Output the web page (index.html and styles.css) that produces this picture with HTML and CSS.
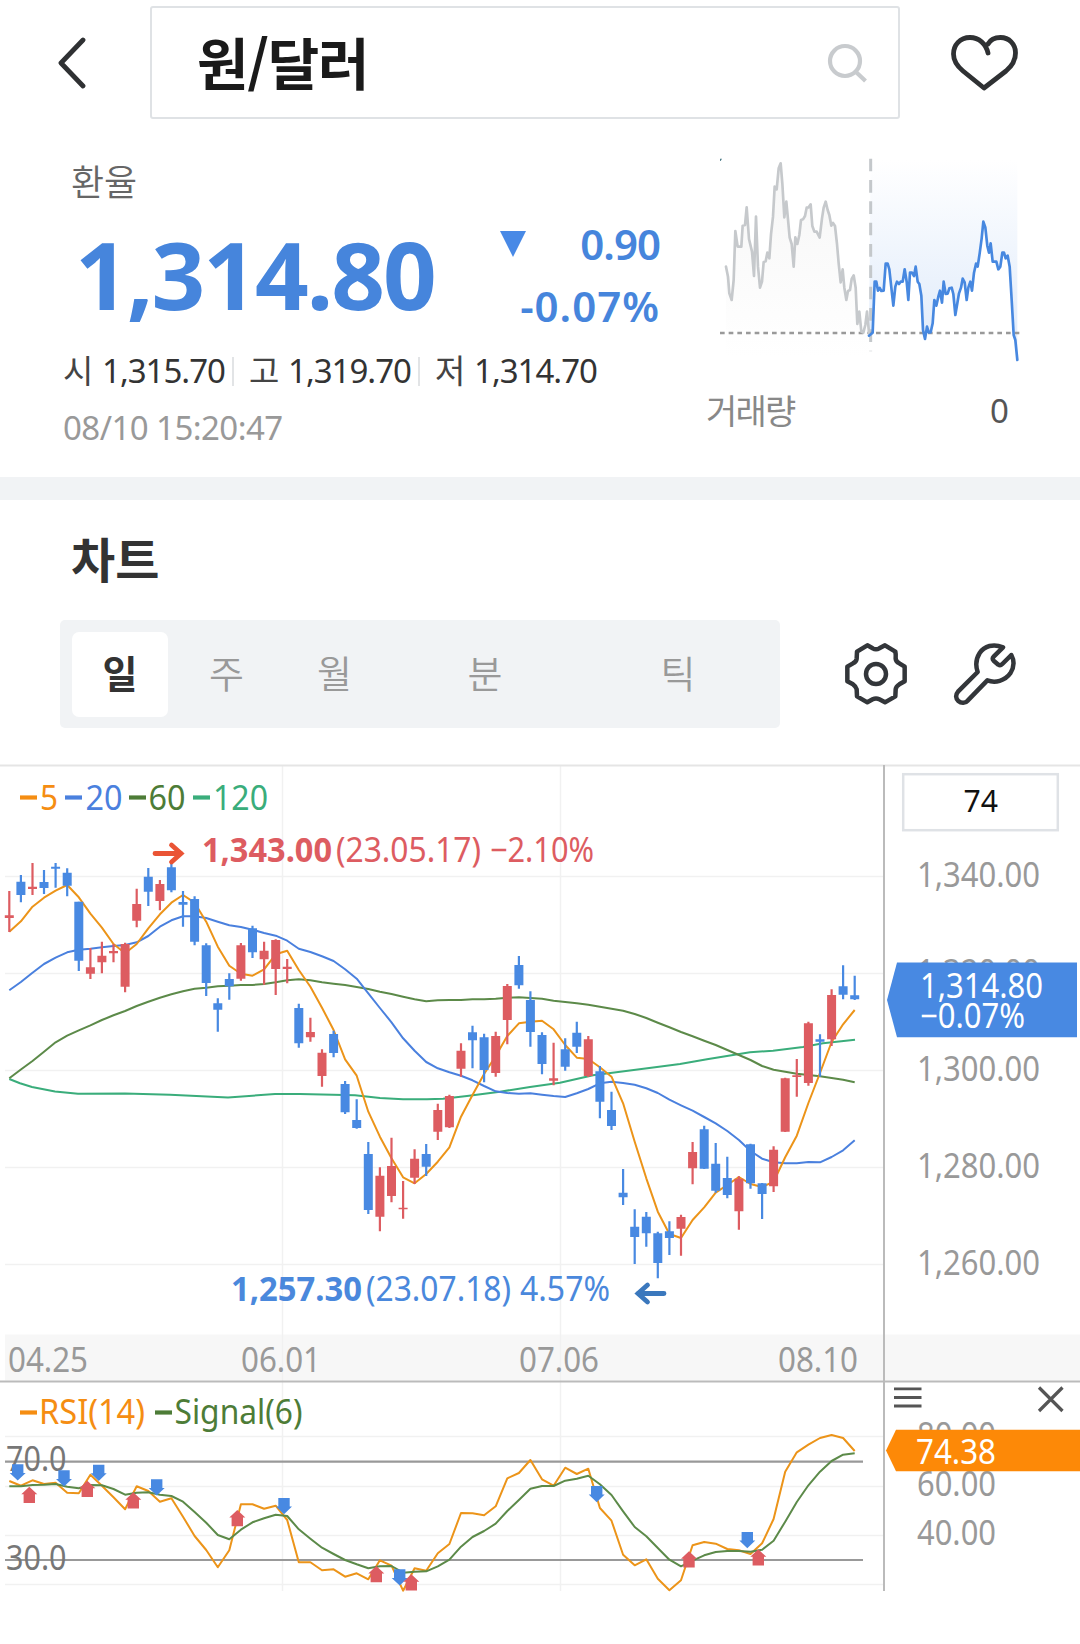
FILE: index.html
```html
<!DOCTYPE html>
<html lang="ko">
<head>
<meta charset="utf-8">
<title>원/달러</title>
<link rel="stylesheet" href="styles.css">
</head>
<body>
<header class="topbar">
  <button class="icon-button back" aria-label="뒤로">
    <svg width="30" height="52" viewBox="0 0 30 52"><path class="stroke" d="M26 3 4 26 26 49"/></svg>
  </button>
  <div class="search">
    <h1 class="search-title">원/달러</h1>
    <svg class="search-icon" width="42" height="42" viewBox="0 0 42 42"><circle cx="18" cy="18" r="15"/><path d="M29 29 38.5 38"/></svg>
  </div>
  <button class="icon-button like" aria-label="관심">
    <svg width="68" height="58" viewBox="950 33 68 58"><path class="stroke" d="M988 52C986 43 979 36.5 970 36.5C960 36.5 953.5 44 953.5 53C953.5 60 957 65 963 70L984 87L1006 70C1012 65 1015.5 60 1015.5 52C1015.5 43 1009 36.5 1000.500 36.500C995 36.500 990.500 38.500 988 43"/></svg>
  </button>
</header>

<section class="summary">
  <div class="quote">
    <p class="quote-label">환율</p>
    <div class="price-row">
      <strong class="price">1,314.80</strong>
      <div class="change">
        <span class="change-value"><svg width="26" height="26" viewBox="0 0 26 26"><path d="M0 0H26L13 26Z"/></svg>0.90</span>
        <span class="change-rate">-0.07%</span>
      </div>
    </div>
    <ul class="ohlc">
      <li><em>시</em>1,315.70</li>
      <li><em>고</em>1,319.70</li>
      <li><em>저</em>1,314.70</li>
    </ul>
    <p class="time">08/10 15:20:47</p>
  </div>
  <div class="mini">
    <svg width="340" height="240" viewBox="0 0 1020 720" id="mini">
      <defs>
        <linearGradient id="blueFade" x1="0" y1="60" x2="0" y2="560" gradientUnits="userSpaceOnUse"><stop offset="0" stop-color="#fff"/><stop offset="1" stop-color="#e3edfb"/></linearGradient>
        <linearGradient id="grayFade" x1="0" y1="80" x2="0" y2="650" gradientUnits="userSpaceOnUse"><stop offset="0" stop-color="#f6f6f6"/><stop offset="1" stop-color="#fff"/></linearGradient>
      </defs>
    </svg>
    <p class="volume"><span>거래량</span><b>0</b></p>
  </div>
</section>

<section class="chart-head">
  <h2>차트</h2>
  <div class="tools">
    <nav class="tabs">
      <a class="tab active">일</a><a class="tab">주</a><a class="tab">월</a><a class="tab">분</a><a class="tab">틱</a>
    </nav>
    <svg class="gear" width="66" height="66" viewBox="24 35 198 198"><path d="M97 48L113 57Q123 63 133 57L150 48L181 67Q183 75 182 88Q183 97 193 102L209 112V156L193 165Q183 171 182 180L181 201L150 219L133 210Q123 205 113 210L97 219L66 201L65 180Q63 171 54 165L37 156V112L54 102Q64 97 65 88L66 67Z"/><circle cx="123" cy="134" r="30"/></svg>
    <svg class="wrench" width="66" height="66" viewBox="351 35 198 198"><path d="M504 54C475 42 448 50 434 71C422 90 421 108 428 128L369 187C361 196 362 208 370 215C379 223 391 222 398 214L457 153C480 162 510 155 526 132C538 113 537 92 529 77L502 104Q496 110 490 106L476 94Q470 88 476 82Z"/></svg>
  </div>
</section>

<section class="chart">
  <svg id="chart" width="1080" height="880" viewBox="0 764 1080 880">
    <rect class="band" x="5" y="1334.500" width="1075" height="46"/>
    <path class="grid" d="M5 876.500H883M5 973.500H883M5 1070.500H883M5 1167.500H883M5 1264.500H883M5 1436.500H883M5 1486.500H883M5 1535.500H883M5 1584.500H883M282.500 766V1591M560.500 766V1591"/>
    <path class="top-line" d="M0 765.500H1080"/>
    <path class="frame" d="M884 765V1591M0 1381.500H1080"/>

    <g id="price-plot"></g>

    <g class="legend">
      <path class="c5" d="M20 797.500H37"/><text class="c5" x="40" y="809.800" textLength="18">5</text>
      <path class="c20" d="M65 797.500H82"/><text class="c20" x="85.500" y="809.800" textLength="37">20</text>
      <path class="c60" d="M129 797.500H146"/><text class="c60" x="148.500" y="809.800" textLength="37">60</text>
      <path class="c120" d="M193 797.500H210"/><text class="c120" x="213" y="809.800" textLength="55">120</text>
      <path class="cr" d="M20 1412.500H37"/><text class="cr" x="39" y="1424.200" textLength="106">RSI(14)</text>
      <path class="c60" d="M155 1412.500H172"/><text class="c60" x="174.500" y="1424.200" textLength="128">Signal(6)</text>
    </g>

    <g class="high">
      <path d="M155 853.500H181M171.500 845 181 853.500 171.500 862"/>
      <text class="bold" x="202" y="861.500" textLength="130">1,343.00</text>
      <text x="336" y="861.500" textLength="145">(23.05.17)</text>
      <text x="490" y="861.500" textLength="104">−2.10%</text>
    </g>
    <g class="low">
      <path d="M664 1293.500H638M647.500 1285 638 1293.500 647.500 1302"/>
      <text class="bold" x="231" y="1301.200" textLength="131">1,257.30</text>
      <text x="366" y="1301.200" textLength="145">(23.07.18)</text>
      <text x="520" y="1301.200" textLength="90">4.57%</text>
    </g>

    <g class="axis">
      <text x="8" y="1372.200" textLength="80">04.25</text>
      <text x="241" y="1372.200" textLength="80">06.01</text>
      <text x="519" y="1372.200" textLength="80">07.06</text>
      <text x="778" y="1372.200" textLength="80">08.10</text>
      <text x="917" y="886.500" textLength="123">1,340.00</text>
      <text x="917" y="983.500" textLength="123">1,320.00</text>
      <text x="917" y="1080.500" textLength="123">1,300.00</text>
      <text x="917" y="1177.500" textLength="123">1,280.00</text>
      <text x="917" y="1274.500" textLength="123">1,260.00</text>
      <text x="917" y="1446.500" textLength="79">80.00</text>
      <text x="917" y="1496.200" textLength="79">60.00</text>
      <text x="917" y="1545" textLength="79">40.00</text>
    </g>

    <rect class="count-box" x="903.200" y="774.200" width="154.600" height="56"/>
    <text class="count" x="963.500" y="812" textLength="34.500">74</text>

    <path class="tag-blue" d="M887 1000 897 962.500H1077V1037.300H897Z"/>
    <path class="tag-orange" d="M886 1450.500 896 1429.700H1080V1471.300H896Z"/>
    <g class="tag-text">
      <text x="920" y="997.500" textLength="123">1,314.80</text>
      <text x="920" y="1027.500" textLength="105">−0.07%</text>
      <text x="916" y="1463.500" textLength="80">74.38</text>
    </g>

    <path class="menu" d="M894 1388.800H921.500M894 1397.500H921.500M894 1406H921.500"/>
    <path class="close" d="M1039 1387.500 1062.500 1411M1062.500 1387.500 1039 1411"/>

    <path class="level" d="M5 1461.700H863M5 1560H863"/>
    <g class="level-text">
      <text x="6" y="1471.200" textLength="60.500">70.0</text>
      <text x="6" y="1569.500" textLength="60.500">30.0</text>
    </g>
    <g id="rsi-plot"></g>
  </svg>
</section>
<script src="script.js"></script>
</body>
</html>
```
FILE: styles.css
```css
* { box-sizing: border-box; margin: 0; padding: 0; }

body {
  width: 1080px;
  height: 1644px;
  overflow: hidden;
  background: #fff;
  color: #2f3133;
  font-family: "Noto Sans", "Noto Sans CJK KR", sans-serif;
}

svg { display: block; }
ul { list-style: none; }
em { font-style: normal; }

/* Top bar */
.topbar {
  display: grid;
  grid-template-columns: 150px 750px 1fr;
  align-items: center;
  height: 126px;
}
.icon-button { border: 0; background: none; }
.back { padding-left: 57px; }
.like { padding-left: 50px; }
.stroke { fill: none; stroke: #2f3133; stroke-width: 4.8; stroke-linejoin: round; stroke-linecap: round; }
.search {
  display: flex;
  align-items: center;
  justify-content: space-between;
  height: 113px;
  margin-top: -1px;
  padding: 0 29px 0 45px;
  border: 2px solid #dfe2e5;
  border-radius: 3px;
}
.search-title {
  font: 700 56px/80px "Noto Sans CJK KR", sans-serif;
  letter-spacing: -1.3px;
  color: #1a1a1a;
  margin-top: -4px;
}
.search-icon { fill: none; stroke: #c8cbce; stroke-width: 4.2; margin-top: 3px; }

/* Quote summary */
.summary {
  display: grid;
  grid-template-columns: 700px 380px;
  height: 374px;
  border-bottom: 23px solid #f1f3f5;
}
.quote { padding: 32px 0 0 63px; }
.quote-label {
  margin-bottom: 2px;
  padding-left: 8px;
  font: 350 36px/44px "Noto Sans CJK KR", sans-serif;
  letter-spacing: 0;
  color: #666;
}
.price-row {
  display: flex;
  justify-content: space-between;
  height: 140px;
  padding-right: 40px;
  color: #4685dc;
}
.price {
  margin-left: 12px;
  font-size: 94px;
  line-height: 140px;
  letter-spacing: -2px;
}
.change {
  display: flex;
  flex-direction: column;
  width: 160px;
  padding-top: 9px;
  font-weight: 600;
  font-size: 42px;
  line-height: 62px;
  letter-spacing: -1px;
  text-align: right;
}
.change-value { display: flex; justify-content: space-between; }
.change-rate { letter-spacing: 1px; }
.change svg { margin-top: 18px; fill: #4889e6; }
.ohlc { display: flex; font-size: 33px; line-height: 53px; letter-spacing: -1px; color: #333; }
.ohlc li { position: relative; width: 186px; }
.ohlc em { display: inline-block; width: 39px; color: #444; }
.ohlc li:not(:last-child)::after {
  content: "";
  position: absolute;
  left: 169px;
  top: 13px;
  width: 2px;
  height: 29px;
  background: #e2e4e6;
}
.time { padding-top: 4px; font-size: 33px; line-height: 53px; letter-spacing: -.55px; color: #999; }

.mini { padding-top: 14px; }
.mini .volume {
  display: flex;
  justify-content: space-between;
  margin-top: 5px;
  padding: 0 71px 0 6px;
  font-size: 34px;
  line-height: 52px;
  letter-spacing: -1.8px;
  color: #888;
}
.volume b { font-weight: 400; font-size: 33px; color: #555; letter-spacing: 0; }
.spark-gray, .spark-blue { fill: none; stroke-width: 8; stroke-linejoin: round; stroke-linecap: round; }
.spark-gray { stroke: #c6c9cc; }
.spark-blue { stroke: #4788e0; }
.spark-base { stroke: #999; stroke-width: 8; stroke-dasharray: 14 12; }
.spark-split { stroke: #c4c8cb; stroke-width: 9; stroke-dasharray: 38 26; }

/* Chart heading and period tabs */
.chart-head { height: 264px; padding: 27px 0 0 60px; }
.chart-head h2 {
  padding-left: 11px;
  font: 700 48px/60px "Noto Sans CJK KR", sans-serif;
  letter-spacing: 0;
  color: #333;
}
.tools { display: flex; align-items: center; margin-top: 33px; }
.tabs {
  display: grid;
  grid-template-columns: 96px 108px 108px 193px 193px;
  align-items: center;
  width: 720px;
  height: 108px;
  padding: 0 12px;
  border-radius: 5px;
  background: #f1f3f5;
}
.tab {
  height: 85px;
  padding-left: 9px;
  font: 350 38px/80px "Noto Sans CJK KR", sans-serif;
  text-align: center;
  color: #999;
}
.tab.active { padding-left: 0; border-radius: 7px; background: #fff; font-weight: 700; color: #333; }
.gear, .wrench { fill: none; stroke: #33363a; stroke-width: 13.5; stroke-linejoin: round; }
.gear { margin-left: 63px; }
.wrench { margin-left: 43px; }

/* Chart */
.chart text { font-size: 34px; font-weight: 400; }
.band { fill: #f7f7f7; }
.grid { stroke: #f1f1f1; stroke-width: 1.5; }
.top-line { stroke: #e5e5e5; stroke-width: 2; }
.frame { stroke: #bbb; stroke-width: 2; fill: none; }
.legend path { stroke-width: 4.2; }
path.c5, path.cr { stroke: #f58d12; }
path.c20 { stroke: #4a80de; }
path.c60 { stroke: #4d7c37; }
path.c120 { stroke: #3aad7b; }
text.c5, text.cr { fill: #f58d12; }
text.c20 { fill: #4a80de; }
text.c60 { fill: #4d7c37; }
text.c120 { fill: #3aad7b; }
.high path { fill: none; stroke: #ea5435; stroke-width: 4.8; stroke-linecap: round; }
.high text { fill: #dd5c61; }
.low path { fill: none; stroke: #3b78bd; stroke-width: 4.8; stroke-linecap: round; }
.low text { fill: #4a88dc; }
.chart text.bold { font-weight: 700; }
.axis text { fill: #999; }
.count-box { fill: #fff; stroke: #dfe2e6; stroke-width: 2.5; }
.chart text.count { fill: #111; font-size: 31px; }
.tag-blue { fill: #4889e2; }
.tag-orange { fill: #fd8907; }
.tag-text text { fill: #fff; }
.menu { stroke: #555; stroke-width: 2.8; }
.close { stroke: #555; stroke-width: 3.2; }
.level { stroke: #999; stroke-width: 2.2; }
.level-text text { fill: #777; }
.line { fill: none; stroke-width: 2; stroke-linejoin: round; }
.line.c5 { stroke: #ec9419; }
.line.c60 { stroke: #5c8a49; }
.wick { fill: none; stroke-width: 2.2; }
.body { fill: none; stroke-width: 9; }
.up { stroke: #dd5c61; }
.down { stroke: #4889e2; }
.mark-up { fill: #dd5c61; }
.mark-down { fill: #4889e2; }
```
FILE: script.js
```js
const NS = 'http://www.w3.org/2000/svg';
const x = i => 9.3 + i * 11.581;

// Chart labels use slightly condensed digits
document.querySelectorAll('#chart text').forEach(t => t.setAttribute('lengthAdjust', 'spacingAndGlyphs'));

function draw(parent, cls, d, extra) {
  const p = document.createElementNS(NS, 'path');
  if (cls) p.setAttribute('class', cls);
  p.setAttribute('d', d);
  for (const k in extra) p.setAttribute(k, extra[k]);
  parent.appendChild(p);
}
const series = ys => 'M' + ys.map((y, i) => x(i).toFixed(1) + ' ' + y).join('L');

// Daily candles: direction, wick top, body top, body bottom, wick bottom
const candles = `U 891 915.3 918 932,D 875 881.7 895 902.3,U 863 886.7 889 895,D 870 882 888 894,D 863 866.7 868.7 887.7,D 868.3 872.7 885.7 896.3,D 901.7 901.7 960.7 971,U 948 967.3 973.7 979,U 941.7 955.7 962.3 973.3,U 944 951 953.3 962.3,U 942.7 944 986.7 992.3,U 888.7 904 920.7 927.3,D 868 876.7 891.7 906,U 880 884 901 910.3,D 863 867.3 890.3 892.3,D 891 902 904.7 926.7,D 896.3 899 941.7 945.3,D 943.3 945.3 983 996,D 998.3 1003.3 1009.7 1031.7,D 973.3 979 986.3 999.7,U 943 945.3 978.7 980.7,D 925.7 928.3 952.3 958,U 941.7 950.7 959.3 984.7,U 939.3 940 969 995,U 959 966.7 969 983.3,D 1003.7 1008 1043.3 1047.7,U 1017.7 1032 1037.3 1041.7,U 1049.3 1052.7 1076 1086.7,D 1030.7 1034 1053 1057.3,D 1081 1084 1112.3 1114,D 1099.3 1120 1128 1128.7,D 1142 1154 1210 1214,U 1167.3 1175.7 1216.7 1231.3,U 1137.7 1166 1196 1202.3,U 1181 1207.7 1209.3 1218.7,U 1149.3 1158.7 1177.7 1184,D 1144 1154 1166.7 1176,U 1103.7 1110 1131.7 1140,U 1094.7 1096 1127.3 1128,U 1043.3 1050.7 1068.7 1076.7,D 1025.7 1032.3 1040.3 1068.3,D 1033.7 1037.3 1070 1082.3,U 1031.7 1036 1073 1076.7,U 984 986 1020 1044.3,D 956 965 985.3 988.7,D 991.3 1000 1032 1046.7,D 1032.3 1035 1064 1074.3,U 1042.7 1078.3 1080.7 1085.3,D 1038.3 1049.3 1066.7 1070.7,D 1021.7 1032.7 1046.7 1053,U 1036 1039.3 1076 1077,D 1066 1071.3 1101.7 1118.3,D 1091.7 1110 1126 1130,D 1169 1192.7 1197.3 1205,D 1209.3 1226.7 1237 1264,D 1212 1216.7 1233.3 1246.7,D 1231.7 1233.3 1263 1278.3,D 1221.3 1231.3 1238 1255,U 1214.7 1217 1228.7 1255.7,U 1142 1152 1168.3 1184.3,D 1125.7 1129.3 1168.7 1169,D 1143 1163.7 1190.7 1192.7,D 1156.7 1178 1195 1198.3,U 1176.3 1178.7 1211.3 1229.7,D 1143.7 1144.3 1183.3 1188.7,D 1183 1183.3 1194 1219,U 1146.3 1149.7 1186.3 1192,U 1077.7 1078.3 1131.7 1132,U 1059 1075.3 1077 1096.7,U 1021.7 1023.3 1083 1085.7,D 1034.3 1039.3 1041.7 1076.7,U 989.3 995 1039.3 1046,D 965.3 986.3 994.7 999.3,D 975.7 995.3 999.3 1000`.split(',').map(c => c.split(' '));

const ma5 = [931.7,921.3,906.7,897.7,890.7,885,897.3,913.7,927.7,944,953.3,944,928.3,914.3,902.7,895,902.7,921.7,946.7,965.7,973.7,975.7,969.3,954.3,950.7,970,986.7,1007.7,1030,1059.3,1075.7,1111.7,1136.7,1158.3,1177.3,1183.3,1174,1161.7,1147.3,1116.7,1095,1074,1056,1036,1023.3,1021.7,1020.7,1029.3,1045,1057.7,1059,1067.3,1076.7,1103.3,1141.7,1178.3,1211.7,1234,1238,1220,1207.3,1192.7,1185,1177,1184,1187,1181.7,1157.3,1135.7,1103,1073,1042,1024.3,1010];
const ma20 = [990.3,982,972.7,964,957.7,952.3,949.7,948.7,947.3,946,945,942.3,936,926.7,920.3,916.3,916.3,918,921.7,925.3,927,929.7,933,935.7,940.7,948.7,952,956.3,961,969.3,978.7,993.3,1008,1022.3,1038.3,1050.7,1062,1068.3,1072.3,1075.7,1080.3,1086,1091.3,1093,1093.7,1093.3,1094.7,1096,1097,1093.3,1089,1083.3,1081.7,1083,1084.7,1088.3,1093,1099.7,1105.3,1110.7,1117,1123.3,1131,1140,1151,1158.7,1162.3,1163.3,1163.3,1162,1162.3,1157,1150.3,1140.3];
const ma60 = [1078.3,1069.5,1061,1051.7,1042.3,1035.7,1030.3,1025.3,1020,1015.3,1011,1006,1001.7,997.7,994.3,991.3,988.7,987.7,986.3,985.7,985,985,984,982.3,980.3,979.3,980.3,982.3,983.7,985,987,989,991.7,994,996.7,999.3,1001.3,1000.3,1000,1000,999.3,999.3,998.7,997.7,997.3,998,998.7,1000.7,1002,1003.3,1004.7,1006.7,1008.7,1010.7,1014,1018,1022.7,1027.3,1032,1036.3,1040.7,1045,1050,1055,1060,1066,1069.7,1071.7,1073.7,1075,1076.3,1078,1079.7,1082.3];
const ma120 = 'M9.3 1079L20 1083.300L32 1087L55 1091.500L78 1093.700L125 1093.500L170 1094.700L228 1097.500L275 1094L300 1094L355 1095.300L380 1098L403 1099.300L427 1099.300L443 1098.700L467 1096L500 1091.700L530 1087L560 1082.700L593 1075.300L657 1067L680 1064L707 1059.300L750 1052.300L773 1050.700L803 1047L823 1043.300L855 1039.700';

const plot = document.getElementById('price-plot');
draw(plot, 'line c120', ma120);
draw(plot, 'line c60', series(ma60));
draw(plot, 'line c20', series(ma20));
draw(plot, 'line c5', series(ma5));
for (const [key, cls] of [['U', 'up'], ['D', 'down']]) {
  let wick = '', body = '';
  candles.forEach((c, i) => {
    if (c[0] !== key) return;
    const px = x(i).toFixed(1);
    wick += `M${px} ${c[1]}V${c[4]}`;
    body += `M${px} ${c[2]}V${c[3]}`;
  });
  draw(plot, 'wick ' + cls, wick);
  draw(plot, 'body ' + cls, body);
}

const rsi = [1481,1485.7,1480.3,1484,1482.7,1492.7,1493.3,1474.7,1485.7,1497.3,1509.3,1486.3,1491,1501.7,1498.3,1516.7,1536,1550,1567.3,1550.3,1504.3,1504.3,1508.7,1505.7,1520,1562.3,1562.3,1570.3,1569.3,1576.7,1573.3,1579.3,1560.3,1565.7,1590.7,1568.3,1570.7,1553.3,1544,1513,1513.3,1515.3,1506.3,1478.3,1473,1460,1479.3,1485.7,1467.7,1474,1468.7,1508,1520.7,1554.7,1565.3,1559.3,1578.7,1590.3,1580.3,1545.3,1542,1543.7,1549,1550.3,1554,1543.3,1519,1471.7,1452.3,1444.7,1438,1435,1438,1451];
const signal = [1486.3,1486.3,1485,1484.7,1484,1486.7,1488.3,1485,1485.3,1489,1494.7,1492.7,1492.3,1494.7,1496,1501.7,1512,1522.7,1535,1539.3,1529.7,1522.3,1518.3,1514.7,1516,1529.3,1538.7,1547.7,1554,1560,1564.3,1568.3,1566.3,1566,1572.7,1571.7,1571.3,1566.3,1559.7,1546.7,1537,1531,1523.7,1511,1500,1488.7,1486,1486,1480.7,1478.7,1475.7,1484.3,1495,1511.3,1527,1536.3,1548,1559.7,1566.3,1560.7,1555.3,1552,1551,1551,1551.7,1549.7,1540.7,1521.7,1502,1485.3,1471.7,1461,1454.7,1453.3];
const rsiPlot = document.getElementById('rsi-plot');
draw(rsiPlot, 'line c5', series(rsi));
draw(rsiPlot, 'line c60', series(signal));

// Crossover markers: x centre, top
const downs = [[17.7,1464.3],[64,1470.3],[98.7,1464.7],[156.7,1479.3],[284,1498],[399.7,1569.3],[596.7,1486],[747.3,1532]];
const ups = [[29.3,1486.7],[87.3,1480.7],[133.3,1492.3],[237.3,1510],[376.3,1566],[411.3,1574.3],[689,1551.3],[758.3,1549.3]];
draw(rsiPlot, 'mark-down', downs.map(([cx, y]) => `M${cx - 5.7} ${y}h11.4v8.600h2.300l-8 7.700l-8-7.700h2.300z`).join(''));
draw(rsiPlot, 'mark-up', ups.map(([cx, y]) => `M${cx} ${y}l8 7.500h-2.300v8.800h-11.4v-8.800h-2.300z`).join(''));

// Intraday sparkline: previous session in gray, current session in blue
const prev = '78,380 84,410 88,460 95,480 101,420 106,273 113,320 124,320 128,257 135,255 140,202 147,297 156,335 162,408 168,230 174,380 180,443 186,425 191,366 197,364 202,338 208,355 213,283 219,230 224,140 230,148 236,85 242,70 247,130 253,232 259,185 264,238 269,293 275,312 281,380 286,292 292,312 298,285 303,240 309,238 315,228 320,203 326,202 332,193 337,258 343,275 350,275 359,293 366,235 371,203 377,185 383,210 388,225 394,257 399,249 405,258 411,312 416,370 422,427 428,388 433,443 439,480 444,453 450,450 455,417 461,406 467,443 472,552 478,515 484,575 490,578 496,555 501,515 507,578 512,585';
const today = '507,587 518,578 524,425 529,425 534,452 539,444 544,453 551,452 557,371 563,371 568,388 574,443 580,497 586,440 591,425 597,432 602,425 608,425 614,388 620,425 625,480 630,398 636,398 642,408 647,380 653,425 658,432 664,467 669,570 675,597 681,560 686,577 692,577 698,550 703,480 709,497 715,470 720,452 726,488 731,425 737,462 743,461 748,445 755,443 760,462 766,525 772,490 777,460 783,443 788,416 794,427 800,480 805,443 811,425 816,452 822,398 828,371 833,380 839,340 845,295 850,245 856,262 862,318 867,338 872,310 878,365 889,365 895,388 901,380 907,338 912,338 917,355 923,347 929,380 935,480 941,585 946,600 952,660';
const mini = document.getElementById('mini');
draw(mini, '', `M${prev}L512 650H78Z`, { fill: 'url(#grayFade)' });
draw(mini, '', `M${today}V60H512Z`, { fill: 'url(#blueFade)' });
draw(mini, 'spark-split', 'M512 56V634');
draw(mini, 'spark-base', 'M60 579H958');
draw(mini, '', 'M60 56h6l-4 7h-2z', { fill: '#4d7c88' });
draw(mini, 'spark-gray', 'M' + prev);
draw(mini, 'spark-blue', 'M' + today);
```
